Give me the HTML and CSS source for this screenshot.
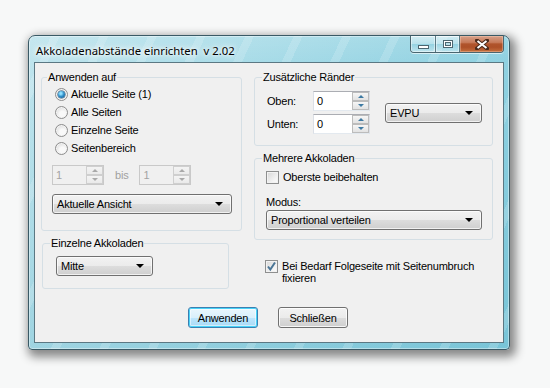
FILE: index.html
```html
<!DOCTYPE html>
<html>
<head>
<meta charset="utf-8">
<link rel="stylesheet" href="styles.css">
</head>
<body>
<div class="window">
  <div class="titlebar">
    <span class="title">Akkoladenabstände einrichten  v 2.02</span>
    <div class="caption">
      <span class="cb min"><i class="min-ico"></i></span>
      <span class="cb max"><i class="max-ico"></i></span>
      <span class="cb close">
        <svg width="14" height="11" viewBox="0 0 14 11"><path d="M2 1.5 L12 9.5 M12 1.5 L2 9.5" stroke="#4a2a1c" stroke-width="4" stroke-linecap="square" fill="none"/><path d="M2.5 2 L11.5 9 M11.5 2 L2.5 9" stroke="#fff" stroke-width="2" fill="none"/></svg>
      </span>
    </div>
  </div>
  <div class="client">
    <div class="cols">
      <div class="col-left">
        <fieldset class="group g-apply">
          <legend>Anwenden auf</legend>
          <div class="radio-row"><span class="radio on"></span><span>Aktuelle Seite (1)</span></div>
          <div class="radio-row"><span class="radio"></span><span>Alle Seiten</span></div>
          <div class="radio-row"><span class="radio"></span><span>Einzelne Seite</span></div>
          <div class="radio-row"><span class="radio"></span><span>Seitenbereich</span></div>
          <div class="range-row">
            <div class="spin disabled"><span class="spin-val">1</span><span class="spin-btns"><span class="up"></span><span class="down"></span></span></div>
            <span class="bis">bis</span>
            <div class="spin disabled"><span class="spin-val">1</span><span class="spin-btns"><span class="up"></span><span class="down"></span></span></div>
          </div>
          <div class="combo combo-view"><span>Aktuelle Ansicht</span><i class="arrow"></i></div>
        </fieldset>
        <fieldset class="group g-single">
          <legend>Einzelne Akkoladen</legend>
          <div class="combo combo-mitte"><span>Mitte</span><i class="arrow"></i></div>
        </fieldset>
      </div>
      <div class="col-right">
        <fieldset class="group g-margins">
          <legend>Zusätzliche Ränder</legend>
          <div class="margins-row">
            <div class="margins-grid">
              <span class="lbl">Oben:</span>
              <div class="spin"><span class="spin-val">0</span><span class="spin-btns"><span class="up"></span><span class="down"></span></span></div>
              <span class="lbl">Unten:</span>
              <div class="spin"><span class="spin-val">0</span><span class="spin-btns"><span class="up"></span><span class="down"></span></span></div>
            </div>
            <div class="combo combo-unit"><span>EVPU</span><i class="arrow"></i></div>
          </div>
        </fieldset>
        <fieldset class="group g-multi">
          <legend>Mehrere Akkoladen</legend>
          <div class="check-row"><span class="check"></span><span>Oberste beibehalten</span></div>
          <div class="modus">Modus:</div>
          <div class="combo combo-mode"><span>Proportional verteilen</span><i class="arrow"></i></div>
        </fieldset>
        <div class="check-row fix">
          <span class="check on"><svg width="11" height="11" viewBox="0 0 11 11"><path d="M2 5.5 L4.3 8.5 L9 1.5" stroke="#4a7596" stroke-width="2" fill="none"/></svg></span>
          <span class="fix-text">Bei Bedarf Folgeseite mit Seitenumbruch fixieren</span>
        </div>
      </div>
    </div>
    <div class="buttons">
      <div class="btn default"><span>Anwenden</span></div>
      <div class="btn"><span>Schließen</span></div>
    </div>
  </div>
</div>
</body>
</html>
```

FILE: styles.css
```css
* { box-sizing: border-box; }
html, body { margin: 0; padding: 0; }
body {
  width: 550px;
  height: 388px;
  overflow: hidden;
  background: #f7f8f8;
  font-family: "Liberation Sans", Arial, sans-serif;
  font-size: 11px;
  letter-spacing: -0.2px;
  color: #000;
}

.window {
  margin: 35px 0 0 28px;
  width: 482px;
  height: 315px;
  border: 1px solid #3a5a66;
  border-radius: 7px 7px 4px 4px;
  background:
    repeating-linear-gradient(115deg, rgba(255,255,255,0) 0 20px, rgba(255,255,255,.16) 20px 28px, rgba(255,255,255,0) 28px 44px),
    linear-gradient(rgba(255,255,255,.12), rgba(255,255,255,0) 26px, rgba(0,130,165,.16)),
    linear-gradient(90deg, #bee4ed 0%, #a9dce8 45%, #8fd1e1 100%);
  box-shadow: 3px 4px 10px 3px rgba(0,0,0,.45), inset 0 0 0 1px rgba(255,255,255,.4);
  padding: 0 5px 6px 5px;
  display: flex;
  flex-direction: column;
}

.titlebar {
  height: 26px;
  display: flex;
  align-items: flex-start;
  flex: none;
}
.title {
  margin: 7px 0 0 2px;
  font-family: "Noto Sans", "Open Sans", sans-serif;
  font-size: 11.3px;
  letter-spacing: 0;
  line-height: 16px;
  white-space: pre;
  color: #000;
  text-shadow: 0 0 6px #fff, 0 0 10px #fff, 0 0 3px #fff;
}

.caption {
  margin-left: auto;
  display: flex;
  height: 17px;
  border: 1px solid #4a6670;
  border-top: none;
  border-radius: 0 0 4px 4px;
  overflow: hidden;
  box-shadow: 0 1px 0 rgba(255,255,255,.6);
}
.cb {
  width: 25px;
  height: 100%;
  border-right: 1px solid #5a7a85;
  background: linear-gradient(rgba(255,255,255,.5), rgba(255,255,255,.25) 50%, rgba(120,195,215,.3) 50%, rgba(255,255,255,.35));
  display: flex;
  align-items: center;
  justify-content: center;
  box-shadow: inset 0 0 0 1px rgba(255,255,255,.45);
}
.cb.max { width: 24px; }
.cb.close {
  width: 43px;
  border-right: none;
  background: linear-gradient(#d7a089, #c77b5a 40%, #b0542c 50%, #ad5028 70%, #c4703f);
  box-shadow: inset 0 0 0 1px rgba(255,220,200,.35);
}
.min-ico {
  display: block;
  width: 11px;
  height: 4px;
  margin-top: 6px;
  background: #fff;
  border: 1px solid #4c6670;
}
.max-ico {
  display: block;
  width: 10px;
  height: 8px;
  border: 1px solid #4c6670;
  box-shadow: inset 0 0 0 1px #fff, inset 0 0 0 2px #4c6670;
  background: #b9dfe8;
}

.client {
  flex: 1;
  background: #f0f0f0;
  border: 1px solid #5b7883;
  padding: 8px 0 0 6px;
  display: flex;
  flex-direction: column;
}
.cols { display: flex; align-items: flex-start; }
.col-left { width: 201px; display: flex; flex-direction: column; }
.col-right { width: 239px; margin-left: 12px; display: flex; flex-direction: column; }

.group {
  margin: 0;
  border: 1px solid #d5dfe5;
  border-radius: 3px;
  min-width: 0;
}
.group legend {
  padding: 0 1px;
  line-height: 13px;
  font-size: 11px;
}

.g-apply { width: 201px; padding: 1px 0 16px 10px; }
.g-apply legend { margin-left: -5px; }
.radio-row { height: 18px; display: flex; align-items: center; gap: 3px; padding-left: 3px; }
.radio {
  width: 13px; height: 13px;
  border-radius: 50%;
  border: 1px solid #8d8d8d;
  background: radial-gradient(circle at 60% 65%, #f9f9f9 0 30%, #dedede 75%);
  box-shadow: inset 0 0 0 1px #f4f4f4;
  position: relative;
  flex: none;
}
.radio.on::after {
  content: "";
  position: absolute;
  left: 2px; top: 2px;
  width: 7px; height: 7px;
  border-radius: 50%;
  background: radial-gradient(circle at 40% 35%, #8fe0ff 0 15%, #2d8cc7 50%, #0f4c7e 100%);
  box-shadow: 0 0 0 0.5px #1e4a6e;
}

.range-row { display: flex; align-items: center; margin-top: 8px; }
.bis { margin: 0 11px; color: #a0a0a0; }

.spin {
  width: 52px; height: 20px;
  display: flex;
  border: 1px solid #dbdfe6;
  border-top-color: #abadb3;
  border-bottom-color: #e3e9ef;
  background: #fff;
}
.spin-val { flex: 1; padding: 2px 0 0 3px; line-height: 14px; }
.spin-btns { width: 17px; display: flex; flex-direction: column; }
.spin-btns span {
  flex: 1;
  border: 1px solid #bcbcbc;
  background: linear-gradient(#f6f6f6, #e2e2e2);
  position: relative;
}
.spin-btns span::after {
  content: "";
  position: absolute;
  left: 5px; top: 2px;
  border-left: 3px solid transparent;
  border-right: 3px solid transparent;
}
.spin-btns .up::after { border-bottom: 3px solid #3e7aa3; }
.spin-btns .down::after { border-top: 3px solid #3e7aa3; }
.spin.disabled { border-color: #c9c9c9; background: #f0f0f0; }
.spin.disabled .spin-val { color: #a3a3a3; }
.spin.disabled .spin-btns span { border-color: #cfcfcf; background: linear-gradient(#f4f4f4, #eaeaea); }
.spin.disabled .spin-btns .up::after { border-bottom-color: #a9a9a9; }
.spin.disabled .spin-btns .down::after { border-top-color: #a9a9a9; }

.combo {
  height: 20px;
  border: 1px solid #707070;
  border-radius: 3px;
  background: linear-gradient(#f2f2f2 0%, #ebebeb 50%, #dddddd 50%, #cfcfcf 100%);
  box-shadow: inset 0 0 0 1px rgba(255,255,255,.7);
  display: flex;
  align-items: center;
  padding: 0 8px 0 4px;
  line-height: 14px;
}
.combo span { flex: 1; }
.arrow {
  width: 0; height: 0;
  border-left: 4px solid transparent;
  border-right: 4px solid transparent;
  border-top: 4px solid #000;
}
.combo-view { width: 180px; margin-top: 9px; }

.g-single { width: 187px; margin-left: 1px; margin-top: 6px; padding: 6px 0 12px 13px; }
.g-single legend { margin-left: -6px; }
.combo-mitte { width: 97px; }

.g-margins { width: 239px; padding: 7px 0 11px 12px; }
.g-margins legend { margin-left: -5px; }
.margins-row { display: flex; align-items: center; }
.margins-grid {
  display: grid;
  grid-template-columns: 46px 57px;
  grid-template-rows: 20px 20px;
  row-gap: 3px;
  align-items: center;
}
.margins-grid .spin { width: 57px; }
.combo-unit { width: 97px; margin-left: 15px; }

.g-multi { width: 239px; margin-top: 6px; padding: 6px 0 9px 11px; }
.g-multi legend { margin-left: -4px; }
.check-row { display: flex; align-items: flex-start; gap: 4px; line-height: 13px; }
.check {
  width: 13px; height: 13px;
  flex: none;
  border: 1px solid #8e8f8f;
  background: linear-gradient(135deg, #d6d6d6, #f4f4f4 70%, #fbfbfb);
  box-shadow: inset 0 0 0 1px #f2f2f2;
  display: flex;
  align-items: center;
  justify-content: center;
}
.modus { margin-top: 12px; line-height: 13px; }
.combo-mode { width: 216px; margin-top: 1px; }

.fix { margin: 20px 0 0 11px; }
.fix-text { width: 200px; line-height: 12px; }

.buttons { display: flex; gap: 20px; margin: 18px 0 0 147px; }
.btn {
  width: 70px; height: 21px;
  border: 1px solid #707070;
  border-radius: 3px;
  background: linear-gradient(#f2f2f2 0%, #ebebeb 50%, #dddddd 50%, #cfcfcf 100%);
  box-shadow: inset 0 0 0 1px rgba(255,255,255,.8);
  display: flex;
  align-items: center;
  justify-content: center;
}
.btn.default {
  border-color: #3c7fb1;
  background: linear-gradient(#eaf6fd 0%, #d9f0fc 50%, #bee6fd 50%, #a7d9f5 100%);
  box-shadow: inset 0 0 0 1px #48d3f8, inset 0 0 0 2px rgba(255,255,255,.5);
}
```
